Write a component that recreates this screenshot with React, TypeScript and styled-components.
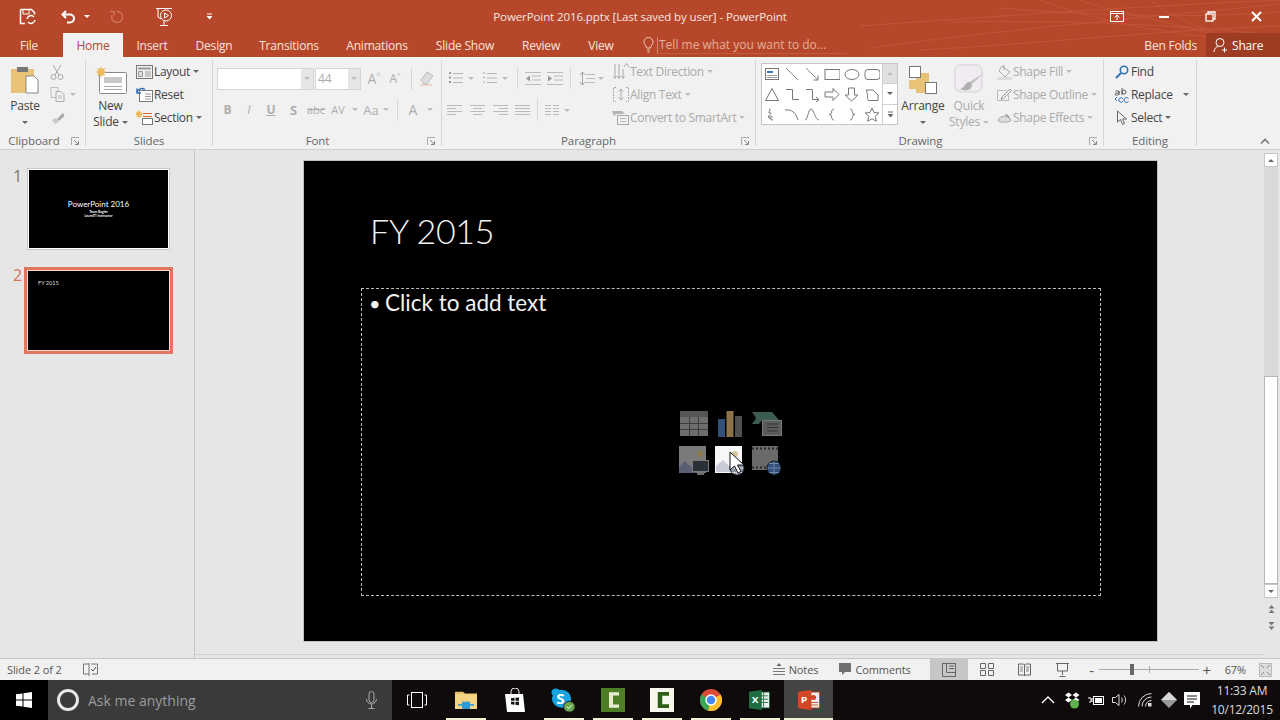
import React from 'react'
import styled, { createGlobalStyle } from 'styled-components'

const GlobalStyle = createGlobalStyle`
  html, body {
    margin: 0;
    width: 1280px;
    height: 720px;
    overflow: hidden;
    background: #e6e6e6;
    font-family: "Open Sans", "Noto Sans", sans-serif;
  }
  * { box-sizing: border-box; }
`

const Page = styled.div`
  width: 1280px;
  height: 720px;
  display: flex;
  flex-direction: column;
`

/* ---------- title bar and tabs ---------- */

const Header = styled.header`
  position: relative;
  height: 57px;
  background: #b7472a;
  color: #fff;
  flex: none;
`

const Streaks = styled.svg`
  position: absolute;
  right: 0;
  top: 0;
`

const TitleRow = styled.div`
  position: relative;
  height: 33px;
  display: grid;
  grid-template-columns: 1fr auto 1fr;
  align-items: center;
`

const Quick = styled.div`
  display: flex;
  align-items: center;
`

const QuickSlot = styled.div<{ $w: number }>`
  width: ${p => p.$w}px;
  display: flex;
  justify-content: center;
  align-items: center;
`

const DocTitle = styled.div`
  font-size: 11.5px;
  color: #f6e6e0;
  letter-spacing: -0.1px;
`

const WinControls = styled.div`
  display: flex;
  justify-content: flex-end;
`

const WinButton = styled.div`
  width: 46.5px;
  height: 33px;
  display: flex;
  align-items: center;
  justify-content: center;
`

const TabRow = styled.nav`
  position: relative;
  height: 24px;
  display: flex;
  align-items: stretch;
`

const Tab = styled.div<{ $w: number; $active?: boolean }>`
  width: ${p => p.$w}px;
  display: flex;
  align-items: center;
  justify-content: center;
  font-size: 12px;
  letter-spacing: -0.2px;
  background: ${p => (p.$active ? '#f1f1f1' : 'transparent')};
  color: ${p => (p.$active ? '#b7472a' : '#f7e4dd')};
`

const TellMe = styled.div`
  display: flex;
  align-items: center;
  margin-left: 16px;
`

const TellText = styled.div`
  width: 190px;
  height: 17px;
  margin-left: 3px;
  padding-left: 1px;
  border-left: 1px solid #d08a75;
  border-bottom: 1px solid #bf5c40;
  font-size: 12px;
  line-height: 16px;
  color: #e3ae9c;
`

const Account = styled.div`
  margin-left: auto;
  display: flex;
  align-items: center;
  font-size: 12px;
  letter-spacing: -0.2px;
  color: #f7e4dd;
`

const ShareBox = styled.div`
  width: 74px;
  height: 24px;
  margin-left: 9px;
  padding-left: 7px;
  display: flex;
  align-items: center;
  gap: 4px;
  background: #9d3c23;
  color: #fff;
`

/* ---------- ribbon ---------- */

const Ribbon = styled.section`
  position: relative;
  flex: none;
  height: 93px;
  padding: 3px 0 4px;
  display: flex;
  background: #f1f1f1;
  box-shadow: inset 0 -1px 0 #cfcfcf;
`

const Group = styled.div<{ $w: number }>`
  width: ${p => p.$w}px;
  height: 86px;
  border-right: 1px solid #d6d6d6;
  display: flex;
  flex-direction: column;
`

const GroupBody = styled.div<{ $pl?: number }>`
  height: 73px;
  flex: none;
  display: flex;
  padding-left: ${p => p.$pl ?? 0}px;
`

const GroupLabel = styled.div<{ $pr?: number }>`
  position: relative;
  height: 16px;
  flex: none;
  padding-right: ${p => p.$pr ?? 0}px;
  font-size: 11.5px;
  line-height: 16px;
  letter-spacing: -0.1px;
  text-align: center;
  color: #666;
`

const Launcher = styled.svg`
  position: absolute;
  right: 5px;
  top: 4px;
`

const BigButton = styled.div<{ $w: number; $off?: boolean; $ml?: number }>`
  width: ${p => p.$w}px;
  margin-left: ${p => p.$ml ?? 0}px;
  flex: none;
  display: flex;
  flex-direction: column;
  align-items: center;
  font-size: 12px;
  line-height: 16px;
  letter-spacing: -0.2px;
  color: ${p => (p.$off ? '#aaa' : '#444')};
`

const BigIcon = styled.div`
  height: 34px;
  margin-bottom: 4px;
  display: flex;
  align-items: flex-end;
  justify-content: center;
`

const TextCaret = styled.div`
  display: flex;
  align-items: center;
  gap: 3px;
  height: 16px;
`

const Caret = styled.span<{ $off?: boolean; $ml?: number; $up?: boolean; $light?: boolean }>`
  display: inline-block;
  flex: none;
  width: 0;
  height: 0;
  margin-left: ${p => p.$ml ?? 0}px;
  border-left: 3px solid transparent;
  border-right: 3px solid transparent;
  border-top: 3px solid ${p => (p.$light ? '#fff' : p.$off ? '#bdbdbd' : '#666')};
  transform: ${p => (p.$up ? 'rotate(180deg)' : 'none')};
`

const SmallColumn = styled.div<{ $ml?: number }>`
  display: flex;
  flex-direction: column;
  margin-left: ${p => p.$ml ?? 0}px;
`

const SmallRow = styled.div<{ $off?: boolean }>`
  height: 23px;
  display: flex;
  align-items: center;
  white-space: nowrap;
  font-size: 12px;
  letter-spacing: -0.3px;
  color: ${p => (p.$off ? '#aaa' : '#444')};
`

const Slot = styled.div<{ $w: number; $off?: boolean; $bold?: boolean; $fs?: number }>`
  width: ${p => p.$w}px;
  flex: none;
  display: flex;
  align-items: center;
  justify-content: center;
  font-size: ${p => p.$fs ?? 12}px;
  font-weight: ${p => (p.$bold ? 700 : 400)};
  color: ${p => (p.$off ? '#aeaeae' : '#555')};
`

const ToolStack = styled.div`
  display: flex;
  flex-direction: column;
`

const ToolRow = styled.div<{ $h: number }>`
  height: ${p => p.$h}px;
  display: flex;
  align-items: center;
`

const VSep = styled.span`
  width: 1px;
  height: 22px;
  background: #d6d6d6;
`

const FontBox = styled.div<{ $w: number }>`
  width: ${p => p.$w}px;
  height: 22px;
  margin-right: 1px;
  display: flex;
  align-items: center;
  justify-content: space-between;
  background: #fff;
  border: 1px solid #d5d5d5;
  font-size: 12px;
  color: #aaa;
  padding-left: 2px;
`

const FontDrop = styled.span`
  width: 12px;
  height: 20px;
  background: #e6e6e6;
  display: flex;
  align-items: center;
  justify-content: center;
`

const Gallery = styled.div`
  width: 137px;
  height: 62px;
  margin: 3px 0 0 5px;
  display: flex;
  background: #fff;
  border: 1px solid #c6c6c6;
`

const GalleryGrid = styled.div`
  display: grid;
  grid-template-columns: repeat(6, 20px);
  grid-auto-rows: 20px;
  place-items: center;
`

const GalleryScroll = styled.div`
  margin-left: auto;
  width: 15px;
  display: flex;
  flex-direction: column;
  border-left: 1px solid #d0d0d0;
`

const GalleryStep = styled.div<{ $gray?: boolean }>`
  flex: 1;
  display: flex;
  align-items: center;
  justify-content: center;
  background: ${p => (p.$gray ? '#e0e0e0' : '#fff')};
  & + & { border-top: 1px solid #d0d0d0; }
`

const Collapse = styled.svg`
  position: absolute;
  left: 1260px;
  top: 81px;
`

/* ---------- workspace ---------- */

const Workspace = styled.main`
  flex: 1;
  min-height: 0;
  display: flex;
  background: #e6e6e6;
`

const ThumbPanel = styled.aside`
  width: 195px;
  flex: none;
  padding-top: 18px;
  border-right: 1px solid #c6c6c6;
  display: flex;
  flex-direction: column;
  gap: 17px;
`

const ThumbRow = styled.div`
  display: flex;
  padding-left: 12px;
`

const ThumbNumber = styled.div<{ $selected?: boolean }>`
  width: ${p => (p.$selected ? 12 : 15)}px;
  font-size: 16px;
  line-height: 16px;
  padding-left: 1px;
  padding-top: ${p => (p.$selected ? 0 : 0)}px;
  color: ${p => (p.$selected ? '#d9705c' : '#777')};
`

const ThumbFrame = styled.div<{ $selected?: boolean }>`
  width: ${p => (p.$selected ? 149 : 143)}px;
  height: ${p => (p.$selected ? 87 : 82)}px;
  background: #000;
  border: ${p => (p.$selected ? '3px solid #e07560' : '1px solid #c8c8c8')};
  box-shadow: ${p => (p.$selected ? 'inset 0 0 0 1px #f7d7cf' : 'inset 0 0 0 1px #fff')};
  color: #fff;
  display: flex;
  flex-direction: column;
`

const ThumbCover = styled.div`
  margin-top: 30px;
  text-align: center;
  font-family: Lato, sans-serif;
`

const ThumbTitle = styled.div`
  font-size: 8px;
  line-height: 11px;
`

const ThumbSub = styled.div`
  font-size: 3.4px;
  line-height: 4px;
  font-weight: 700;
`

const ThumbHeading = styled.div`
  margin: 9px 0 0 11px;
  font-family: Lato, sans-serif;
  font-size: 5.6px;
  color: #ddd;
`

const Canvas = styled.div`
  flex: 1;
  padding: 11px 0 0 109px;
  margin-bottom: 3px;
  border-bottom: 1px solid #cfcfcf;
`

const Slide = styled.article`
  width: 853px;
  height: 480px;
  padding: 0 56px 0 57px;
  background: #000;
  outline: 1px solid #c0c0c0;
  color: #f2f2f2;
  font-family: Lato, sans-serif;
`

const SlideTitle = styled.h1`
  margin: 0;
  height: 127px;
  padding: 46px 0 0 9px;
  font-size: 34px;
  line-height: 48px;
  font-weight: 300;
  letter-spacing: -0.3px;
`

const Placeholder = styled.div`
  height: 308px;
  border: 1px dashed #bcbcbc;
  display: grid;
`

const BulletLine = styled.div`
  grid-area: 1 / 1;
  padding: 0 0 0 7px;
  display: flex;
  font-size: 22.5px;
  line-height: 28px;
`

const Bullet = styled.span`
  width: 16px;
  font-size: 20px;
`

const ContentCenter = styled.div`
  grid-area: 1 / 1;
  display: flex;
  align-items: center;
  justify-content: center;
  padding-right: 2px;
`

const ContentGrid = styled.div`
  position: relative;
  display: grid;
  grid-template-columns: repeat(3, 36.5px);
  grid-template-rows: repeat(2, 37px);
  place-items: center;
`

const Pointer = styled.svg`
  position: absolute;
  left: 54px;
  top: 46px;
`

const ScrollColumn = styled.div`
  width: 16px;
  flex: none;
  padding-top: 3px;
  display: flex;
  flex-direction: column;
  align-items: flex-start;
`

const ScrollStep = styled.div`
  width: 14px;
  height: 14px;
  background: #fff;
  border: 1px solid #c6c6c6;
  display: flex;
  align-items: center;
  justify-content: center;
`

const ScrollTrack = styled.div`
  width: 14px;
  height: 209px;
  background: #d9d9d9;
`

const ScrollThumb = styled.div`
  width: 14px;
  height: 208px;
  background: #fff;
  border: 1px solid #b5b5b5;
`

const PageJump = styled.div<{ $mt: number }>`
  width: 14px;
  margin-top: ${p => p.$mt}px;
  display: flex;
  justify-content: center;
`

/* ---------- status bar ---------- */

const StatusBar = styled.footer`
  flex: none;
  height: 22px;
  display: flex;
  align-items: center;
  background: #f1f1f1;
  border-top: 1px solid #c6c6c6;
  font-size: 11px;
  letter-spacing: -0.1px;
  color: #555;
`

const StatusText = styled.span`
  margin-left: 7px;
  width: 76px;
`

const StatusRight = styled.div`
  margin-left: auto;
  height: 100%;
  display: flex;
  align-items: center;
`

const StatusItem = styled.div<{ $ml?: number }>`
  display: flex;
  align-items: center;
  gap: 4px;
  margin-left: ${p => p.$ml ?? 0}px;
`

const ViewButton = styled.div<{ $active?: boolean; $w?: number; $ml?: number }>`
  width: ${p => p.$w ?? 38}px;
  margin-left: ${p => p.$ml ?? 0}px;
  height: 100%;
  display: flex;
  align-items: center;
  justify-content: center;
  background: ${p => (p.$active ? '#c6c6c6' : 'transparent')};
`

const ZoomSign = styled.span<{ $w: number; $ml?: number }>`
  width: ${p => p.$w}px;
  margin-left: ${p => p.$ml ?? 0}px;
  text-align: center;
  font-size: 15px;
  line-height: 20px;
  color: #555;
`

const ZoomTrack = styled.div`
  position: relative;
  width: 100px;
  height: 1px;
  background: #aaa;
`

const ZoomThumb = styled.span<{ $at: number; $tall?: boolean }>`
  position: absolute;
  left: ${p => p.$at}px;
  top: ${p => (p.$tall ? -5 : -3)}px;
  width: ${p => (p.$tall ? 4 : 1)}px;
  height: ${p => (p.$tall ? 11 : 7)}px;
  background: ${p => (p.$tall ? '#666' : '#aaa')};
`

/* ---------- taskbar ---------- */

const Taskbar = styled.div`
  flex: none;
  height: 40px;
  display: flex;
  align-items: stretch;
  background: #0f0b0b;
  color: #fff;
`

const StartButton = styled.div`
  width: 48px;
  display: flex;
  align-items: center;
  justify-content: center;
  background: #000;
`

const SearchBox = styled.div`
  width: 344px;
  padding: 0 15px 0 9px;
  display: flex;
  align-items: center;
  background: #3a3a3a;
  font-size: 14px;
  color: #9c9c9c;
`

const Cortana = styled.span`
  width: 22px;
  height: 22px;
  margin-right: 9px;
  border-radius: 50%;
  border: 3px solid #e8e8e8;
`

const SearchMic = styled.span`
  margin-left: auto;
  display: flex;
`

const TaskButton = styled.div<{ $running?: boolean; $active?: boolean }>`
  position: relative;
  width: 49px;
  display: flex;
  align-items: center;
  justify-content: center;
  background: ${p => (p.$active ? '#454343' : 'transparent')};
  &::after {
    content: '';
    display: ${p => (p.$running ? 'block' : 'none')};
    position: absolute;
    bottom: 0;
    left: ${p => (p.$active ? 0 : 5)}px;
    right: ${p => (p.$active ? 0 : 4)}px;
    height: 2px;
    background: #eef5d2;
  }
`

const Tray = styled.div`
  margin-left: auto;
  display: flex;
  align-items: center;
`

const TraySlot = styled.div<{ $w: number }>`
  width: ${p => p.$w}px;
  display: flex;
  justify-content: center;
`

const Clock = styled.div`
  width: 76px;
  text-align: center;
  font-size: 12px;
  line-height: 19px;
  letter-spacing: -0.2px;
  color: #dcdcdc;
`

const Svg = styled.svg`
  display: block;
  flex: none;
`

/* ---------- little helpers ---------- */

type IconProps = { w: number; h: number; vw?: number; vh?: number; children: React.ReactNode }

const I = ({ w, h, vw, vh, children }: IconProps) => (
  <Svg width={w} height={h} viewBox={`0 0 ${vw ?? w} ${vh ?? h}`} preserveAspectRatio="none" fill="none">{children}</Svg>
)

const Lines = ({ x, y, w, n, gap, c }: { x: number; y: number; w: number; n: number; gap: number; c: string }) => (
  <>{Array.from({ length: n }, (_, i) => <path key={i} d={`M${x} ${y + i * gap + 0.5}h${w}`} stroke={c} />)}</>
)

const LauncherIcon = () => (
  <Launcher width="9" height="9" viewBox="0 0 9 9" fill="none">
    <path d="M.5 8V.5H8" stroke="#aaa" />
    <path d="M3 3l4 4M4 7.500h3.500V4" stroke="#888" />
  </Launcher>
)

const tabs: [string, number][] = [
  ['Insert', 58], ['Design', 66], ['Transitions', 84], ['Animations', 92],
  ['Slide Show', 84], ['Review', 68], ['View', 52],
]

const galleryShapes = [
  <><rect x="1.500" y="1.500" width="13" height="11" stroke="#777" /><path d="M3 5h6" stroke="#3b78c2" strokeWidth="2" /><path d="M3 8.500h10M3 10.500h10" stroke="#999" /></>,
  <path d="M2 1l12 12" stroke="#888" />,
  <><path d="M2 1l12 12" stroke="#888" /><path d="M9.500 13h4.500V8.500" stroke="#777" /></>,
  <rect x="1" y="2.500" width="15" height="10" stroke="#777" />,
  <ellipse cx="8" cy="7.500" rx="7" ry="5" stroke="#777" />,
  <rect x="1" y="2.500" width="15" height="10" rx="3" stroke="#777" />,
  <path d="M8 1.500L14.500 13.500h-13z" stroke="#777" />,
  <path d="M2 2.500h6.500v10H15" stroke="#777" />,
  <path d="M2 2.500h6.500v10H15M12 10l3 2.500-3 2.500" stroke="#777" />,
  <path d="M1 5h8V1.500L15 7.500l-6 6V10H1z" stroke="#777" />,
  <path d="M4.500 1h6v7H14l-6.500 6L1 8h3.500z" stroke="#777" />,
  <path d="M2 3h7l5 5v5.500H5C2 13.500 5 8 2 3z" stroke="#777" />,
  <path d="M5 2c4 0-3 4 1 4s-4 3-1 5 4-2 2-2-2 4 2 4" stroke="#777" />,
  <path d="M1 3c7-1 11 3 13 10" stroke="#777" />,
  <path d="M1 13C4 13 4 2 7 2s4 11 8 11" stroke="#777" />,
  <path d="M10 2C7 2 8 6 7 7l-2 .500 2 .500c1 1 0 5 3 5" stroke="#777" />,
  <path d="M6 2c3 0 2 4 3 5l2 .500-2 .500c-1 1 0 5-3 5" stroke="#777" />,
  <path d="M8 1l2 4.500 5 .500-3.700 3.300 1 5L8 11.700 3.700 14.300l1-5L1 6l5-.500z" stroke="#777" />,
]

export default function App() {
  return (
    <Page>
      <GlobalStyle />
      <Header>
        <Streaks width="480" height="57" viewBox="0 0 480 57" fill="none" stroke="#c2553a">
          <path d="M70 48C200 30 320 20 480 4M120 50C240 44 360 30 480 26M200 8c90 8 200 10 280 4M240 0c60 24 160 40 240 42M280 0c40 14 110 26 200 52M350 0c20 16 70 40 130 50M150 22c110-2 230 2 330 14M60 26c140-10 280-20 420-26" />
        </Streaks>
        <TitleRow>
          <Quick>
            <QuickSlot $w={54}>
              <I w={17} h={17}>
                <path d="M1.500 1.500h11l3 3v2M1.500 1.500v14H6" stroke="#fff" strokeWidth="1.500" />
                <path d="M4 2v4h6V2" stroke="#fff" />
                <path d="M8 11a4 4 0 0 1 7-2M16 12a4 4 0 0 1-7 2" stroke="#fff" strokeWidth="1.500" />
              </I>
            </QuickSlot>
            <QuickSlot $w={30}>
              <I w={16} h={14}>
                <path d="M5 1L1.500 4.500 5 8M2 4.500h7a4 4 0 0 1 0 8H6" stroke="#fff" strokeWidth="2" />
              </I>
            </QuickSlot>
            <QuickSlot $w={6}><Caret $light /></QuickSlot>
            <QuickSlot $w={52}>
              <I w={14} h={14}>
                <path d="M8 1.500a5.500 5.500 0 1 1-5 3.500M1 1.500h4v4" stroke="#cf7259" strokeWidth="1.500" />
              </I>
            </QuickSlot>
            <QuickSlot $w={44}>
              <I w={18} h={19}>
                <path d="M1 1.500h16M3 1.500v1M9 14v4M5 18.500h8" stroke="#fff" />
                <circle cx="11" cy="8.500" r="5.500" stroke="#fff" />
                <path d="M9.500 6v5l4-2.500z" stroke="#fff" />
                <path d="M3 2v8l3 2" stroke="#fff" />
              </I>
            </QuickSlot>
            <QuickSlot $w={46}>
              <I w={7} h={7}>
                <path d="M1 1h5" stroke="#fff" />
                <path d="M.5 3h6L3.500 6.500z" fill="#fff" />
              </I>
            </QuickSlot>
          </Quick>
          <DocTitle>PowerPoint 2016.pptx [Last saved by user] - PowerPoint</DocTitle>
          <WinControls>
            <WinButton>
              <I w={14} h={11}>
                <rect x=".5" y=".5" width="13" height="10" stroke="#fff" />
                <path d="M.5 2.500h13" stroke="#fff" />
                <path d="M7 9V4.500M4.500 6.500L7 4l2.500 2.500" stroke="#fff" />
              </I>
            </WinButton>
            <WinButton>
              <I w={10} h={2}><path d="M0 1h10" stroke="#fff" strokeWidth="2" /></I>
            </WinButton>
            <WinButton>
              <I w={11} h={11}>
                <rect x="1" y="3" width="7" height="7" stroke="#fff" strokeWidth="1.300" />
                <path d="M3 3V1h7v7H8" stroke="#fff" strokeWidth="1.300" />
              </I>
            </WinButton>
            <WinButton>
              <I w={11} h={11}><path d="M1 1l9 9M10 1l-9 9" stroke="#fff" strokeWidth="2" /></I>
            </WinButton>
          </WinControls>
        </TitleRow>
        <TabRow>
          <Tab $w={58}>File</Tab>
          <Tab $w={5} />
          <Tab $w={60} $active>Home</Tab>
          {tabs.map(([name, w]) => <Tab key={name} $w={w}>{name}</Tab>)}
          <TellMe>
            <I w={11} h={16}>
              <path d="M3.500 11C3 8 1 7.500 1 5a4.500 4.500 0 0 1 9 0c0 2.500-2 3-2.500 6zM4 13h3M4.500 15h2" stroke="#f0c8b8" />
            </I>
            <TellText>Tell me what you want to do...</TellText>
          </TellMe>
          <Account>
            Ben Folds
            <ShareBox>
              <I w={15} h={16}>
                <circle cx="7" cy="5.500" r="4" stroke="#fff" />
                <path d="M1 15c0-3 2-5 4-5.500M9 13h5M11.500 10.500v5" stroke="#fff" />
              </I>
              Share
            </ShareBox>
          </Account>
        </TabRow>
      </Header>

      <Ribbon>
        <Group $w={86}>
          <GroupBody>
            <BigButton $w={50}>
              <BigIcon>
                <I w={30} h={29}>
                  <rect x="1" y="4" width="23" height="24" fill="#e8c277" />
                  <rect x="7" y="2" width="11" height="5" fill="#777" />
                  <path d="M16 11h8l4 4v13H16z" fill="#fff" stroke="#888" />
                </I>
              </BigIcon>
              <div>Paste</div>
              <TextCaret><Caret /></TextCaret>
            </BigButton>
            <SmallColumn>
              <SmallRow $off>
                <Slot $w={14}>
                  <I w={14} h={16}>
                    <path d="M3 1l6 10M11 1L5 11" stroke="#a8a8a8" />
                    <circle cx="3.500" cy="13" r="2.500" stroke="#a8a8a8" />
                    <circle cx="10.500" cy="13" r="2.500" stroke="#a8a8a8" />
                  </I>
                </Slot>
              </SmallRow>
              <SmallRow $off>
                <Slot $w={14}>
                  <I w={15} h={15}>
                    <path d="M1 .5h7v10H1z" stroke="#bbb" />
                    <path d="M6 4.500h5l3 3v7H6z" fill="#f1f1f1" stroke="#aaa" />
                    <path d="M8 9h4M8 11h4" stroke="#bbb" />
                  </I>
                </Slot>
                <Caret $off $ml={6} />
              </SmallRow>
              <SmallRow $off>
                <Slot $w={14}>
                  <I w={15} h={14}>
                    <path d="M7 8l6-6 1.500 3L9 10z" fill="#aaa" />
                    <path d="M2 9l4-2 3 4-4 2z" fill="#c8c8c8" />
                  </I>
                </Slot>
              </SmallRow>
            </SmallColumn>
          </GroupBody>
          <GroupLabel $pr={17}>Clipboard<LauncherIcon /></GroupLabel>
        </Group>

        <Group $w={127}>
          <GroupBody>
            <BigButton $w={49}>
              <BigIcon>
                <I w={32} h={28}>
                  <rect x="4.500" y="6.500" width="27" height="21" rx="1" fill="#fff" stroke="#888" />
                  <rect x="9" y="11" width="18" height="6" fill="#c8c8c8" />
                  <path d="M9 20.500h18M9 23.500h18" stroke="#aaa" />
                  <path d="M6 0l1 3 3-1-1 3 3 1-3 1 1 3-3-1-1 3-1-3-3 1 1-3-3-1 3-1-1-3 3 1z" fill="#eeb95a" />
                </I>
              </BigIcon>
              <div>New</div>
              <TextCaret>Slide<Caret /></TextCaret>
            </BigButton>
            <SmallColumn>
              <SmallRow>
                <Slot $w={19}>
                  <I w={17} h={14}>
                    <rect x=".5" y=".5" width="16" height="13" stroke="#777" />
                    <path d="M2 3.500h13" stroke="#999" strokeWidth="2" />
                    <path d="M2.500 6.500h4v5h-4z" fill="#ddd" stroke="#999" />
                    <path d="M9 7h6M9 9h6M9 11h6" stroke="#999" />
                  </I>
                </Slot>
                Layout<Caret $ml={3} />
              </SmallRow>
              <SmallRow>
                <Slot $w={19}>
                  <I w={17} h={15}>
                    <rect x="3.500" y="3.500" width="13" height="11" fill="#fff" stroke="#777" />
                    <path d="M9 7h6M9 9.500h6M9 12h6" stroke="#999" />
                    <path d="M1 5c1-3 5-4.500 8-2.500M1 1.500V6h4" stroke="#2f6fb5" strokeWidth="1.500" />
                  </I>
                </Slot>
                Reset
              </SmallRow>
              <SmallRow>
                <Slot $w={19}>
                  <I w={17} h={15}>
                    <path d="M7 3.500h9M7 6.500h9" stroke="#d9652f" />
                    <rect x="6.500" y="8.500" width="10" height="6" fill="#fff" stroke="#777" />
                    <path d="M3 0l.8 2 2-.6-.6 2 2 .8-2 .8.600 2-2-.6L3 8.500l-.8-2-2 .6.600-2-2-.8" fill="#eeb95a" />
                  </I>
                </Slot>
                Section<Caret $ml={3} />
              </SmallRow>
            </SmallColumn>
          </GroupBody>
          <GroupLabel>Slides</GroupLabel>
        </Group>

        <Group $w={229}>
          <GroupBody $pl={4}>
            <ToolStack>
              <ToolRow $h={37}>
                <FontBox $w={97}><span /><FontDrop><Caret $off /></FontDrop></FontBox>
                <FontBox $w={46}>44<FontDrop><Caret $off /></FontDrop></FontBox>
                <Slot $w={24} $off $fs={14}>A˄</Slot>
                <Slot $w={18} $off $fs={12}>A˄</Slot>
                <Slot $w={14}><VSep /></Slot>
                <Slot $w={16}>
                  <I w={15} h={15}>
                    <path d="M2 9l6-8 6 4-6 8H5z" fill="#ddd" stroke="#bbb" />
                    <path d="M1 14h12" stroke="#e3b9a6" />
                  </I>
                </Slot>
              </ToolRow>
              <ToolRow $h={25}>
                <Slot $w={21} $off $bold>B</Slot>
                <Slot $w={22} $off><i>I</i></Slot>
                <Slot $w={22} $off $bold><u>U</u></Slot>
                <Slot $w={23} $off $bold $fs={13}>S</Slot>
                <Slot $w={22} $off $fs={11}><s>abc</s></Slot>
                <Slot $w={22} $off $fs={11}>AV</Slot>
                <Slot $w={11}><Caret $off /></Slot>
                <Slot $w={22} $off $fs={13}>Aa</Slot>
                <Slot $w={7}><Caret $off /></Slot>
                <Slot $w={16}><VSep /></Slot>
                <Slot $w={16} $off $fs={14}>A</Slot>
                <Slot $w={18}><Caret $off /></Slot>
              </ToolRow>
            </ToolStack>
          </GroupBody>
          <GroupLabel $pr={19}>Font<LauncherIcon /></GroupLabel>
        </Group>

        <Group $w={314}>
          <GroupBody $pl={4}>
            <ToolStack>
              <ToolRow $h={36}>
                <Slot $w={20}><I w={14} h={12}><Lines x={4} y={1} w={10} n={3} gap={4.500} c="#b5b5b5" /><path d="M0 1h2M0 5.500h2M0 10h2" stroke="#999" strokeWidth="2" /></I></Slot>
                <Slot $w={10}><Caret $off /></Slot>
                <Slot $w={4} />
                <Slot $w={20}><I w={14} h={13}><Lines x={4} y={1} w={10} n={3} gap={4.500} c="#b5b5b5" /><path d="M0 1h2M0 5.500h2M0 10h2" stroke="#aaa" /></I></Slot>
                <Slot $w={10}><Caret $off /></Slot>
                <Slot $w={14}><VSep /></Slot>
                <Slot $w={18}><I w={16} h={13}><Lines x={0} y={0} w={16} n={2} gap={12} c="#bbb" /><path d="M7 4h9M7 8h9" stroke="#bbb" /><path d="M5 3.500L1 6.500l4 3z" fill="#999" /></I></Slot>
                <Slot $w={4} />
                <Slot $w={18}><I w={16} h={13}><Lines x={0} y={0} w={16} n={2} gap={12} c="#bbb" /><path d="M7 4h9M7 8h9" stroke="#bbb" /><path d="M1 3.500l4 3-4 3z" fill="#999" /></I></Slot>
                <Slot $w={12}><VSep /></Slot>
                <Slot $w={22}><I w={16} h={15}><Lines x={7} y={3} w={9} n={3} gap={4} c="#bbb" /><path d="M3.500 1v13M1 4l2.500-3L6 4M1 11l2.500 3L6 11" stroke="#a5a5a5" /></I></Slot>
                <Slot $w={6}><Caret $off /></Slot>
              </ToolRow>
              <ToolRow $h={28}>
                <Slot $w={16}><I w={15} h={11}><path d="M0 .5h15M0 3.500h9M0 6.500h15M0 9.500h9" stroke="#bbb" /></I></Slot>
                <Slot $w={7} />
                <Slot $w={16}><I w={15} h={11}><path d="M0 .5h15M3 3.500h9M0 6.500h15M3 9.500h9" stroke="#bbb" /></I></Slot>
                <Slot $w={7} />
                <Slot $w={16}><I w={15} h={11}><path d="M0 .5h15M6 3.500h9M0 6.500h15M6 9.500h9" stroke="#bbb" /></I></Slot>
                <Slot $w={6} />
                <Slot $w={16}><I w={15} h={11}><path d="M0 .5h15M0 3.500h15M0 6.500h15M0 9.500h15" stroke="#bbb" /></I></Slot>
                <Slot $w={14}><VSep /></Slot>
                <Slot $w={16}><I w={14} h={10}><path d="M0 .5h6M8 .5h6M0 3.500h6M8 3.500h6M0 6.500h6M8 6.500h6M0 9.500h6M8 9.500h6" stroke="#bbb" /></I></Slot>
                <Slot $w={14}><Caret $off /></Slot>
              </ToolRow>
            </ToolStack>
            <SmallColumn $ml={7}>
              <SmallRow $off>
                <Slot $w={19}>
                  <I w={16} h={17}>
                    <path d="M2 1v13M6 1v13M10 6v8" stroke="#aaa" />
                    <path d="M.5 13L2 15.500 3.500 13M4.500 13L6 15.500 7.500 13M8.500 13l1.500 2.500 1.500-2.500" stroke="#aaa" />
                    <path d="M11 4l2.500-3.500L16 4" stroke="#aaa" />
                  </I>
                </Slot>
                Text Direction<Caret $off $ml={3} />
              </SmallRow>
              <SmallRow $off>
                <Slot $w={19}>
                  <I w={16} h={15}>
                    <path d="M3 .5H.5v14H3M13 .5h2.500v14H13" stroke="#aaa" strokeDasharray="2 1" />
                    <path d="M8 2v11M5.500 4.500L8 2l2.500 2.500M5.500 10.500L8 13l2.500-2.500" stroke="#aaa" />
                  </I>
                </Slot>
                Align Text<Caret $off $ml={3} />
              </SmallRow>
              <SmallRow $off>
                <Slot $w={19}>
                  <I w={17} h={15}>
                    <path d="M0 1h10l3 3H4L2 6.500z" fill="#b5b5b5" />
                    <rect x="5.500" y="5.500" width="11" height="9" fill="#f1f1f1" stroke="#aaa" />
                    <path d="M8 8.500h6M8 11.500h6" stroke="#bbb" />
                  </I>
                </Slot>
                Convert to SmartArt<Caret $off $ml={3} />
              </SmallRow>
            </SmallColumn>
          </GroupBody>
          <GroupLabel $pr={20}>Paragraph<LauncherIcon /></GroupLabel>
        </Group>

        <Group $w={348}>
          <GroupBody>
            <Gallery>
              <GalleryGrid>
                {galleryShapes.map((shape, i) => <I key={i} w={16} h={15}>{shape}</I>)}
              </GalleryGrid>
              <GalleryScroll>
                <GalleryStep $gray><Caret $off $up /></GalleryStep>
                <GalleryStep><Caret /></GalleryStep>
                <GalleryStep>
                  <I w={7} h={7}><path d="M1 1h5" stroke="#666" /><path d="M.5 3h6L3.500 6.500z" fill="#666" /></I>
                </GalleryStep>
              </GalleryScroll>
            </Gallery>
            <BigButton $w={48} $ml={1}>
              <BigIcon>
                <I w={28} h={28}>
                  <rect x="7" y="7" width="13" height="20" fill="#e8c277" />
                  <rect x="0" y="14" width="14" height="9" fill="#e8c277" />
                  <rect x=".5" y=".5" width="11" height="11" fill="#fff" stroke="#777" />
                  <rect x="16.500" y="16.500" width="11" height="11" fill="#fff" stroke="#777" />
                </I>
              </BigIcon>
              <div>Arrange</div>
              <TextCaret><Caret /></TextCaret>
            </BigButton>
            <BigButton $w={44} $off>
              <BigIcon>
                <I w={31} h={30}>
                  <rect x="1" y="1" width="27" height="27" rx="6" fill="#f1ecf2" stroke="#d0d0d0" />
                  <path d="M30 9L17 21l-3-2z" fill="#c0c0c0" />
                  <path d="M15 18c-4 0-4 6-9 7 6 3 12 1 12-4z" fill="#b0b0b0" />
                </I>
              </BigIcon>
              <div>Quick</div>
              <TextCaret>Styles<Caret $off /></TextCaret>
            </BigButton>
            <SmallColumn $ml={5}>
              <SmallRow $off>
                <Slot $w={17}>
                  <I w={15} h={16}>
                    <path d="M5 2l8 6-5 5-6-6z" stroke="#aaa" />
                    <path d="M7 1v5" stroke="#aaa" />
                    <path d="M0 13h15v3H0z" fill="#ddd" />
                  </I>
                </Slot>
                Shape Fill<Caret $off $ml={3} />
              </SmallRow>
              <SmallRow $off>
                <Slot $w={17}>
                  <I w={15} h={15}>
                    <path d="M.5 3.500h9M.5 3.500v10h11v-6" stroke="#bbb" />
                    <path d="M5 10l8-8 1.500 1.500-8 8-2.500 1z" stroke="#999" />
                  </I>
                </Slot>
                Shape Outline<Caret $off $ml={3} />
              </SmallRow>
              <SmallRow $off>
                <Slot $w={17}>
                  <I w={15} h={14}>
                    <path d="M1 9a7 6 0 0 1 13 0c0 3-13 3-13 0z" fill="#ddd" stroke="#aaa" />
                    <path d="M8 3c3 0 5 3 5 5-2-3-4-2-5-5z" fill="#999" />
                  </I>
                </Slot>
                Shape Effects<Caret $off $ml={3} />
              </SmallRow>
            </SmallColumn>
          </GroupBody>
          <GroupLabel $pr={18}>Drawing<LauncherIcon /></GroupLabel>
        </Group>

        <Group $w={93}>
          <GroupBody $pl={9}>
            <SmallColumn>
              <SmallRow>
                <Slot $w={18}>
                  <I w={14} h={14}>
                    <circle cx="9" cy="5" r="3.700" stroke="#2f6fb5" strokeWidth="1.600" />
                    <path d="M6 8l-5 5" stroke="#2f6fb5" strokeWidth="2" />
                  </I>
                </Slot>
                Find
              </SmallRow>
              <SmallRow>
                <Slot $w={18}>
                  <I w={16} h={16}>
                    <path d="M5 4v4M1.500 4.500c2-1.500 3.500-.5 3.500 1.500-3-.5-4.500 1-3.500 2 1 .5 2.500 0 3.500-1M8 1v7M8 5a2 2 0 1 1 0 .1" stroke="#555" />
                    <path d="M1 12l2 2M1 12l2-2" stroke="#2f6fb5" />
                    <path d="M9 12a2.200 2.200 0 1 0 0 2M14.500 11.500a2.500 2.500 0 1 0 0 3" stroke="#2f6fb5" />
                  </I>
                </Slot>
                Replace<Caret $ml={10} />
              </SmallRow>
              <SmallRow>
                <Slot $w={18}>
                  <I w={12} h={16}>
                    <path d="M1.500 1v11l3-2.500 2 5 2-1-2-4.500h4z" stroke="#666" />
                  </I>
                </Slot>
                Select<Caret $ml={3} />
              </SmallRow>
            </SmallColumn>
          </GroupBody>
          <GroupLabel>Editing</GroupLabel>
        </Group>

        <Collapse width="10" height="7" viewBox="0 0 10 7" fill="none">
          <path d="M1 5.500l4-4 4 4" stroke="#777" strokeWidth="1.600" />
        </Collapse>
      </Ribbon>

      <Workspace>
        <ThumbPanel>
          <ThumbRow>
            <ThumbNumber>1</ThumbNumber>
            <ThumbFrame>
              <ThumbCover>
                <ThumbTitle>PowerPoint 2016</ThumbTitle>
                <ThumbSub>Team Bugler</ThumbSub>
                <ThumbSub>LearnIT! Instructor</ThumbSub>
              </ThumbCover>
            </ThumbFrame>
          </ThumbRow>
          <ThumbRow>
            <ThumbNumber $selected>2</ThumbNumber>
            <ThumbFrame $selected>
              <ThumbHeading>FY 2015</ThumbHeading>
            </ThumbFrame>
          </ThumbRow>
        </ThumbPanel>

        <Canvas>
          <Slide>
            <SlideTitle>FY 2015</SlideTitle>
            <Placeholder>
              <BulletLine><Bullet>•</Bullet><span>Click to add text</span></BulletLine>
              <ContentCenter>
                <ContentGrid>
                  <I w={28} h={25}>
                    <rect width="28" height="25" fill="#6e6e6e" />
                    <rect width="28" height="6" fill="#555" />
                    <path d="M0 12.500h28M0 18.500h28M9.500 6v19M18.500 6v19" stroke="#3c3c3c" />
                  </I>
                  <I w={25} h={26}>
                    <rect x="0" y="8" width="7" height="18" fill="#33507a" />
                    <rect x="8.500" y="0" width="7" height="26" fill="#8c7448" />
                    <rect x="17" y="5" width="7" height="21" fill="#4f4f4f" />
                  </I>
                  <I w={30} h={26}>
                    <path d="M0 1h20l7 8h-17l-3 4-7 0 4-6z" fill="#3c5b52" />
                    <rect x="10.500" y="9.500" width="19" height="15" fill="#5c5c5c" stroke="#777" />
                    <path d="M15 13h11M15 16.500h11M15 20h11" stroke="#333" />
                  </I>
                  <I w={30} h={29}>
                    <rect width="27" height="27" fill="#7a7a7a" />
                    <circle cx="21" cy="8" r="3" fill="#8a7a4e" />
                    <path d="M0 27V21l6-6 12 12z" fill="#5a6072" />
                    <rect x="13.500" y="14.500" width="16" height="11" fill="#2a3038" stroke="#7a7a7a" />
                    <path d="M18 28h7" stroke="#6a6a6a" strokeWidth="2" />
                  </I>
                  <I w={30} h={30}>
                    <rect width="27" height="27" fill="#f7f7f7" />
                    <circle cx="20" cy="8" r="3" fill="#d8c89c" />
                    <path d="M1 26v-6l7-6 12 12z" fill="#c9ccd8" />
                    <circle cx="22" cy="22" r="7" fill="#8c98aa" stroke="#222" />
                    <path d="M15.500 22h13M22 15.500v13M17 17.500h10M17 26.500h10" stroke="#d8dce4" />
                  </I>
                  <I w={30} h={30}>
                    <rect width="26" height="24" fill="#6a6a6a" />
                    <path d="M0 2.500h26M0 21.500h26" stroke="#2a2a2a" strokeWidth="2" strokeDasharray="2 2" />
                    <circle cx="22" cy="22" r="7" fill="#33507a" stroke="#111" />
                    <path d="M15.500 22h13M22 15.500v13M17 17.500h10M17 26.500h10" stroke="#6f88ac" />
                  </I>
                  <Pointer width="16" height="23" viewBox="0 0 16 23" fill="none">
                    <path d="M1 1v18l4.500-4 3.500 7 3-1.500L8.500 14H15z" fill="#fff" stroke="#111" />
                  </Pointer>
                </ContentGrid>
              </ContentCenter>
            </Placeholder>
          </Slide>
        </Canvas>

        <ScrollColumn>
          <ScrollStep><Caret $up /></ScrollStep>
          <ScrollTrack />
          <ScrollThumb />
          <ScrollStep><Caret /></ScrollStep>
          <PageJump $mt={7}>
            <I w={7} h={8}><path d="M.5 3.500h6L3.500 0zM.5 8h6L3.500 4.500z" fill="#777" /></I>
          </PageJump>
          <PageJump $mt={9}>
            <I w={7} h={8}><path d="M.5 0h6L3.500 3.500zM.5 4.500h6L3.500 8z" fill="#777" /></I>
          </PageJump>
        </ScrollColumn>
      </Workspace>

      <StatusBar>
        <StatusText>Slide 2 of 2</StatusText>
        <I w={15} h={13}>
          <path d="M6 1H.5v10H6M6 0v13" stroke="#777" />
          <path d="M8 1h6.500v10H9" stroke="#777" />
          <path d="M8 6l2 2 3-4" stroke="#555" />
        </I>
        <StatusRight>
          <StatusItem>
            <I w={12} h={13}>
              <path d="M6 0L3.500 3h5z" fill="#666" />
              <path d="M0 5.500h12M0 8.500h12M0 11.500h12" stroke="#777" />
            </I>
            Notes
          </StatusItem>
          <StatusItem $ml={21}>
            <I w={12} h={13}><path d="M0 0h12v9H6l-3 3V9H0z" fill="#707070" /></I>
            Comments
          </StatusItem>
          <ViewButton $active $ml={19}>
            <I w={14} h={14}>
              <rect x=".5" y=".5" width="13" height="13" stroke="#666" />
              <path d="M4.500 1v8.500h9M7 3h5M7 5.500h5" stroke="#666" />
            </I>
          </ViewButton>
          <ViewButton>
            <I w={14} h={13}>
              <path d="M.5.500h5v5h-5zM8.500.500h5v5h-5zM.5 7.500h5v5h-5zM8.500 7.500h5v5h-5z" stroke="#666" />
            </I>
          </ViewButton>
          <ViewButton>
            <I w={13} h={14}>
              <path d="M.5 1h5l1 1 1-1h5v11h-5l-1 1-1-1h-5zM6.500 2v11" stroke="#666" />
              <path d="M2 4h3M2 6h3M2 8h3M8 4h3M8 6h3M8 8h3" stroke="#888" />
            </I>
          </ViewButton>
          <ViewButton>
            <I w={13} h={14}>
              <path d="M0 .5h13M1.500 1v7h10V1M6.500 8v4M3.500 13.500h6" stroke="#666" />
            </I>
          </ViewButton>
          <ZoomSign $w={14} $ml={3}>-</ZoomSign>
          <ZoomTrack>
            <ZoomThumb $at={50} />
            <ZoomThumb $at={31} $tall />
          </ZoomTrack>
          <ZoomSign $w={16}>+</ZoomSign>
          <StatusItem $ml={10}>67%</StatusItem>
          <ViewButton $w={30} $ml={4}>
            <I w={13} h={14}>
              <rect x=".5" y=".5" width="12" height="13" fill="#ddd" stroke="#bbb" />
              <path d="M2 2l3 3M11 2L8 5M2 12l3-3M11 12L8 9" stroke="#888" />
            </I>
          </ViewButton>
        </StatusRight>
      </StatusBar>

      <Taskbar>
        <StartButton>
          <I w={16} h={16}>
            <path d="M0 2.300L6.500 1.400V7.500H0zM7.500 1.200L16 0v7.500H7.500zM0 8.500h6.500v6.100L0 13.700zM7.500 8.500H16V16l-8.500-1.200z" fill="#fff" />
          </I>
        </StartButton>
        <SearchBox>
          <Cortana />
          Ask me anything
          <SearchMic>
            <I w={11} h={18}>
              <rect x="3" y=".5" width="5" height="11" rx="2.500" stroke="#aaa" />
              <path d="M.5 8a5 5 0 0 0 10 0M5.500 13v4M2.500 17.500h6" stroke="#aaa" />
            </I>
          </SearchMic>
        </SearchBox>
        <TaskButton>
          <I w={20} h={16}>
            <rect x="4.500" y=".5" width="11" height="15" stroke="#fff" />
            <path d="M2.500 3H.5v10h2M17.500 3h2v10h-2" stroke="#fff" />
          </I>
        </TaskButton>
        <TaskButton $running>
          <I w={22} h={18} vw={22} vh={22}>
            <path d="M0 1h8l2 2h12v19H0z" fill="#e9c46a" />
            <rect x="0" y="4" width="22" height="18" fill="#f3d584" />
            <rect x="7" y="13" width="8" height="9" fill="#2f9bd6" />
            <rect x="3" y="16" width="16" height="2" fill="#2f9bd6" />
          </I>
        </TaskButton>
        <TaskButton>
          <I w={20} h={24} vw={20} vh={28}>
            <path d="M6 7V4a4 4 0 0 1 8 0v3" stroke="#fff" />
            <path d="M0 7h18l2 21H2z" fill="#fff" />
            <path d="M6 12l3.500-.500V15H6zM10.500 11.400L14 11v4h-3.500zM6 16h3.500v3.500L6 19zM10.500 16H14v4l-3.500-.500z" fill="#111" />
          </I>
        </TaskButton>
        <TaskButton $running>
          <I w={25} h={25} vw={26} vh={28}>
            <circle cx="11" cy="12" r="10" fill="#19a3e0" />
            <circle cx="5" cy="5" r="4.500" fill="#19a3e0" />
            <text x="5.500" y="18" fontFamily="Open Sans" fontWeight="700" fontSize="16" fill="#fff">S</text>
            <circle cx="19" cy="21" r="6" fill="#6aa84f" stroke="#222" />
            <path d="M16.500 21l2 2 3-4" stroke="#fff" />
          </I>
        </TaskButton>
        <TaskButton $running>
          <I w={24} h={24} vw={24} vh={29}>
            <rect width="24" height="29" fill="#4e7e26" />
            <path d="M18 7H10v15h8" stroke="#e7eccf" strokeWidth="4" />
          </I>
        </TaskButton>
        <TaskButton $running>
          <I w={24} h={24} vw={24} vh={29}>
            <rect width="24" height="29" fill="#f7f7ee" />
            <path d="M19 7H10v15h9" stroke="#2f5e17" strokeWidth="4.500" />
          </I>
        </TaskButton>
        <TaskButton $running>
          <I w={22} h={22}>
            <circle cx="11" cy="11" r="11" fill="#dd4b39" />
            <path d="M11 11L1.500 5.500A11 11 0 0 0 8 21.600z" fill="#3aa757" />
            <path d="M11 11l9.500-5.500A11 11 0 0 1 8 21.600z" fill="#fbc02d" />
            <circle cx="11" cy="11" r="5" fill="#4688f1" stroke="#fff" strokeWidth="1.500" />
          </I>
        </TaskButton>
        <TaskButton $running>
          <I w={21} h={20} vw={23} vh={24}>
            <rect x="10.500" y="2.500" width="12" height="19" fill="#eee" stroke="#1e6e42" />
            <path d="M12 7h9M12 11h9M12 15h9M16 3v18" stroke="#1e6e42" />
            <path d="M0 2l14-2v24L0 22z" fill="#1e6e42" />
            <text x="3" y="16" fontFamily="Open Sans" fontWeight="700" fontSize="11" fill="#fff">X</text>
          </I>
        </TaskButton>
        <TaskButton $running $active>
          <I w={22} h={20} vw={23} vh={24}>
            <rect x="10.500" y="2.500" width="12" height="19" fill="#eee" stroke="#d24726" />
            <circle cx="16" cy="9" r="3" fill="#d24726" />
            <path d="M12 15h9M12 18h9" stroke="#d24726" />
            <path d="M0 2l14-2v24L0 22z" fill="#d24726" />
            <text x="3" y="16" fontFamily="Open Sans" fontWeight="700" fontSize="11" fill="#fff">P</text>
          </I>
        </TaskButton>
        <Tray>
          <TraySlot $w={24}>
            <I w={14} h={8}><path d="M1 7l6-6 6 6" stroke="#fff" strokeWidth="1.300" /></I>
          </TraySlot>
          <TraySlot $w={24}>
            <I w={15} h={17}>
              <path d="M0 3l3.500-2.500L7 3 3.500 5.500zM7.500 3L11 .5 14.500 3 11 5.500zM0 8l3.500-2.500L7 8l-3.500 2.500zM7.500 8L11 5.500 14.500 8 11 10.500z" fill="#fff" />
              <circle cx="9.500" cy="12" r="4.500" fill="#5fb24c" />
            </I>
          </TraySlot>
          <TraySlot $w={24}>
            <I w={16} h={11}>
              <rect x="5.500" y="1.500" width="10" height="8" stroke="#fff" />
              <rect x="7" y="3" width="7" height="5" fill="#fff" />
              <path d="M0 3h3v4H1M3 4h2M3 6h2" stroke="#fff" />
            </I>
          </TraySlot>
          <TraySlot $w={24}>
            <I w={16} h={14}>
              <path d="M.5 4.500h3L7 1.500v11l-3.500-3h-3z" stroke="#ddd" />
              <path d="M9.500 4.500c1 1.500 1 3.500 0 5M12 2.500c2 2.500 2 6.500 0 9" stroke="#ddd" />
            </I>
          </TraySlot>
          <TraySlot $w={26}>
            <I w={14} h={14}>
              <path d="M.5 13.500a13 13 0 0 1 13-13M4 13.500A9.500 9.500 0 0 1 13.500 4M7.500 13.500a6 6 0 0 1 6-6" stroke="#ddd" />
              <rect x="10" y="10" width="3.500" height="3.500" fill="#ddd" />
            </I>
          </TraySlot>
          <TraySlot $w={22}>
            <I w={16} h={16}>
              <path d="M8 0l8 8-8 8-8-8z" fill="#9a9a9a" />
              <path d="M8 0l8 8H0z" fill="#d9d9d9" />
            </I>
          </TraySlot>
          <TraySlot $w={24}>
            <I w={16} h={17}>
              <path d="M0 0h16v13H8.500L6 16.500V13H0z" fill="#fff" />
              <path d="M3 4h10M3 7h10M3 10h7" stroke="#111" />
            </I>
          </TraySlot>
          <Clock>11:33 AM<br />10/12/2015</Clock>
        </Tray>
      </Taskbar>
    </Page>
  )
}
